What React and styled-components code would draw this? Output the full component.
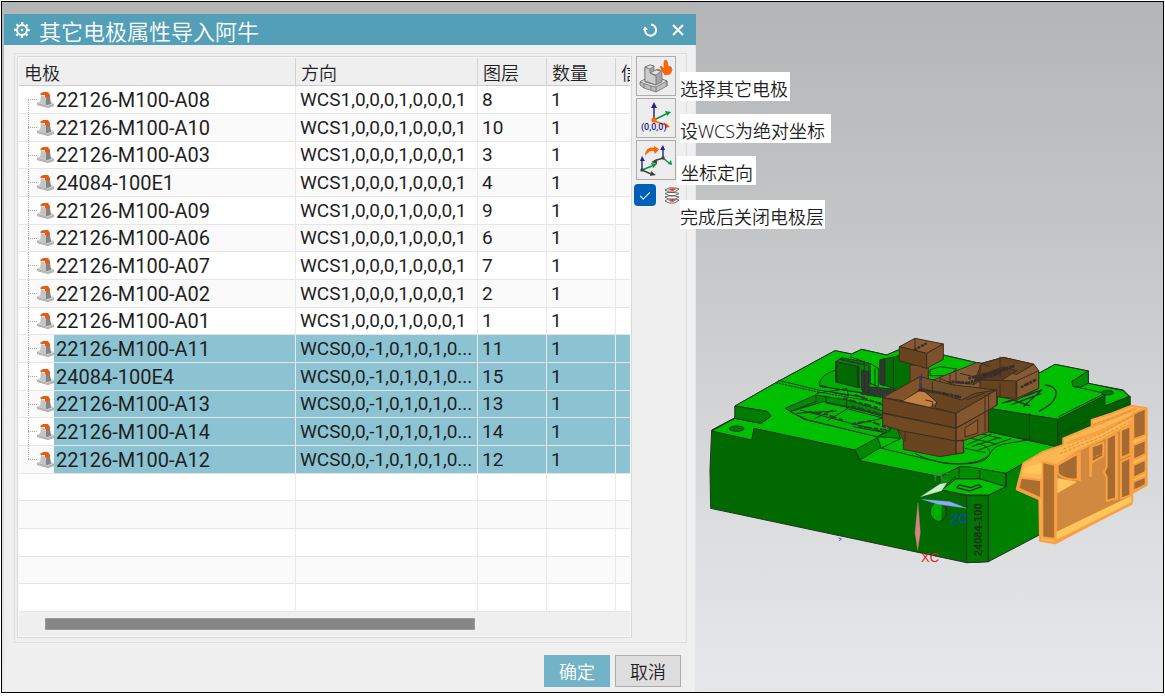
import React from "react";
import styled, { createGlobalStyle, css } from "styled-components";

const GlobalStyle = createGlobalStyle`
  *, *::before, *::after { box-sizing: border-box; }
  body {
    margin: 0;
    background: #fff;
    color: #1f1f1f;
    font-family: Roboto, "Noto Sans CJK SC", sans-serif;
  }
  button, input { font: inherit; margin: 0; padding: 0; }
`;

const CJK = `"Noto Sans CJK SC", sans-serif`;

const Workspace = styled.main`
  display: grid;
  grid-template-columns: minmax(0, 692fr) minmax(0, 467fr);
  margin: 1px 1px 0;
  padding-left: 2px;
  border: 1px solid #000;
  background: linear-gradient(#b4b5b7, #c5c6c8 35%, #d9dadc 70%, #e7e8eb);
`;

const Dialog = styled.section`
  position: relative;
  z-index: 1;
  margin-top: 12px;
  background: #efefef;
  border-right: 1px solid #e6e6e8;
`;

const TitleBar = styled.header`
  display: flex;
  align-items: center;
  height: 31px;
  margin-right: -1px;
  padding: 0 10px;
  background: #539fb8;
  color: #fff;
`;

const Title = styled.h1`
  flex: 1;
  margin: 0 0 0 9px;
  font: 350 22px/30px ${CJK};
`;

const TitleButton = styled.button`
  display: flex;
  align-items: center;
  justify-content: center;
  width: 16px;
  height: 20px;
  margin-left: 12px;
  border: 0;
  background: none;
  color: inherit;
`;

const Group = styled.div`
  display: flex;
  gap: 4px;
  margin: 8px 8px 0 10px;
  padding: 2px 0 4px 2px;
  border: 1px solid #dfdfdf;
`;

const ListBox = styled.div`
  flex: 1;
  min-width: 0;
  padding: 1px;
  border: 1px solid #dadada;
  background: #f8f8f8;
`;

const Table = styled.table`
  width: 100%;
  table-layout: fixed;
  border-collapse: separate;
  border-spacing: 0;
`;

const HeadCell = styled.th`
  height: 28px;
  padding: 0 0 0 5px;
  overflow: hidden;
  white-space: nowrap;
  text-align: left;
  background: #efefef;
  border-right: 1px solid #d4d4d4;
  border-bottom: 1px solid #cdcdcd;
  font: 350 18px/26px ${CJK};
  &:last-child { border-right: 0; }
`;

const Row = styled.tr`
  height: 28px;
  background: #fff;
  &:nth-child(3n) { height: 27px; }
  &:nth-child(even) { background: #fafafa; }
`;

const Cell = styled.td`
  padding: 0 0 0 4px;
  overflow: hidden;
  white-space: nowrap;
  font-size: 19px;
  line-height: 26px;
  border-right: 1px solid #e9e9e9;
  border-bottom: 1px solid #e6e6e6;
  &:last-child { border-right: 0; }
  ${(p) => p.$selected && css`background: #8cc3d2; background-clip: padding-box;`}
`;

const dots = (dir) => `repeating-linear-gradient(${dir}, #a3a3a3 0 1px, transparent 1px 2px)`;

const NameCell = styled(Cell)`
  padding-left: 18px;
  font-size: 20px;
  background-color: transparent;
  background-image:
    ${dots("to bottom")},
    ${dots("to right")}
    ${(p) => p.$selected && ", linear-gradient(to right, transparent 35px, #8cc3d2 35px)"};
  background-size: 1px ${(p) => (p.$end ? "50%" : "100%")}, 10px 1px, 100% 100%;
  background-position: 9px ${(p) => (p.$end === "first" ? "100%" : "0")}, 9px 50%, 0 0;
  background-repeat: no-repeat;
`;

const NameLine = styled.div`
  display: flex;
  align-items: center;
  gap: 1px;
`;

const ScrollTrack = styled.div`
  height: 24px;
  padding: 6px 0 0 26px;
  background: #efefef;
`;

const ScrollThumb = styled.div`
  width: 430px;
  max-width: 75%;
  height: 12px;
  background: #858585;
  border: 1px solid #9a9a9a;
`;

const Tools = styled.div`
  display: flex;
  flex-direction: column;
  gap: 2px;
  flex: 0 0 50px;
`;

const Tool = styled.div`
  position: relative;
  display: flex;
  align-items: center;
  height: 40px;
`;

const ToolButton = styled.button`
  display: flex;
  align-items: center;
  justify-content: center;
  width: 40px;
  height: 40px;
  border: 1px solid #adadad;
  background: #ededed;
`;

const CheckRow = styled(Tool)`
  gap: 8px;
  height: 22px;
  margin: 2px 0 0 -2px;
`;

const CheckBox = styled.input`
  appearance: none;
  display: grid;
  place-items: center;
  width: 22px;
  height: 22px;
  border-radius: 4px;
  background: #005fb8;
  &:checked::after {
    content: "";
    width: 10px;
    height: 5px;
    border: solid #fff;
    border-width: 0 0 1px 1px;
    transform: translateY(-1px) rotate(-45deg);
  }
`;

const Callout = styled.label`
  position: absolute;
  top: 16px;
  left: ${(p) => p.$left || 44}px;
  padding: 3px ${(p) => p.$trail || 1}px 0 ${(p) => p.$lead || 0}px;
  height: 29px;
  background: #fff;
  white-space: nowrap;
  font: 350 18px/28px "Noto Sans", ${CJK};
`;

const Footer = styled.footer`
  display: flex;
  justify-content: flex-end;
  gap: 5px;
  padding: 12px 14px 4px 0;
`;

const DialogButton = styled.button`
  width: 66px;
  height: 32px;
  border: 1px solid ${(p) => (p.$primary ? "#73b3c8" : "#adadad")};
  background: ${(p) => (p.$primary ? "#73b3c8" : "#dedede")};
  color: ${(p) => (p.$primary ? "#fff" : "#1f1f1f")};
  font: 350 18px/28px ${CJK};
`;

const Scene = styled.svg`
  display: block;
  width: 100%;
`;

const GearIcon = () => (
  <svg width="16" height="16" viewBox="0 0 16 16" fill="none" stroke="#fff">
    <circle cx="8" cy="8" r="5" strokeWidth="2" />
    <circle cx="8" cy="8" r="6.8" strokeWidth="2" strokeDasharray="2.3 3.04" strokeDashoffset="1.15" />
    <circle cx="8" cy="8" r="1.2" fill="#fff" stroke="none" />
  </svg>
);

const ResetIcon = () => (
  <svg width="16" height="16" viewBox="0 0 16 16" fill="none" stroke="#fff" strokeWidth="2">
    <path d="M9 2.5A5.6 5.6 0 1 1 3 7" />
    <path d="M.8 8.2 3 4.5l3 3.2Z" fill="#fff" stroke="none" />
  </svg>
);

const CloseIcon = () => (
  <svg width="14" height="14" viewBox="0 0 14 14" stroke="#fff" strokeWidth="2">
    <path d="m2 2 10 10M12 2 2 12" />
  </svg>
);

const ElectrodeIcon = () => (
  <svg width="18" height="18" viewBox="0 0 18 18" strokeLinejoin="round">
    <path d="m0 12 4-2h9l4 3v2l-6 2-11-3Z" fill="#9c9c9c" />
    <path d="m0 12 4-2h9l4 3-6 2Z" fill="#d6d6d6" />
    <path d="m0 13 11 3 6-2" fill="none" stroke="#c9c9c9" strokeWidth=".8" />
    <path d="m4 4 5 2v8l-6-2Z" fill="#c4c4c4" />
    <path d="m9 5 4 1 1 7-4 1H9Z" fill="#848484" />
    <path d="m3 3 3-2h5l2 3v2l-2 1-3-1V4H4Z" fill="#ea5b10" />
  </svg>
);

const PickIcon = () => (
  <svg width="36" height="36" viewBox="0 0 36 36" stroke="#666" strokeWidth=".7" strokeLinejoin="round">
    <path d="m2 24 7-4h12l8 3v5l-11 6-12-4-4-3Z" fill="#bdbdbd" />
    <path d="m2 24 7-4h12l8 3-11 6-5-1Z" fill="#e2e2e2" />
    <path d="M18 29v5m-12-8v4M13 28v4M29 23v5" fill="none" />
    <path d="m7 9 5-2 4 1v5l4-2 4 2v11l-6 3-11-3Z" fill="#a5a5a5" />
    <path d="m7 9 5 2v4l6 3v9L7 23Z" fill="#cdcdcd" />
    <path d="m7 9 5-2 4 1-4 3ZM12 15l6-3 5 1-5 4Z" fill="#e5e5e5" />
    <path d="m22 9 1-1 3 3V4l1-2 2 1 1 5 3 1 1 3-2 4-5 1Z" fill="#ff6500" stroke="#e35b08" />
  </svg>
);

const OriginIcon = () => (
  <svg width="36" height="36" viewBox="0 0 36 36" fill="none" strokeWidth="1.5">
    <path d="M16 20V6" stroke="#24248e" />
    <path d="m16 2-3 6h6Z" fill="#24248e" />
    <path d="m16 20 12-6" stroke="#00953c" />
    <path d="m33 12-6-1 2 5Z" fill="#00953c" />
    <path d="m16 21 12 4" stroke="#ff6500" />
    <path d="m32 27-4-4-1 5Z" fill="#ff6500" />
    <circle cx="16" cy="20" r="2.6" fill="#ff6500" />
    <text x="3" y="30" fill="#24248e" fontSize="9" fontWeight="500" fontFamily="Roboto, sans-serif">(0,0,0)</text>
  </svg>
);

const OrientIcon = () => (
  <svg width="36" height="36" viewBox="0 0 36 36" fill="none" strokeWidth="1.4">
    <path d="M4 28V17M25 16V6" stroke="#24248e" />
    <path d="m4 14-2 5h5ZM25 3l-3 5h5Z" fill="#24248e" />
    <path d="m4 28 10-4M25 16l6 5" stroke="#00953c" />
    <path d="m19 22-6-1 2 5ZM34 23l-1-5-3 4Z" fill="#00953c" />
    <path d="m4 28 9 4M25 16l-9 3" stroke="#444" />
    <path d="m18 33-5-4-1 5ZM13 20l6-3v5Z" fill="#444" />
    <circle cx="4" cy="28" r="1.7" fill="#444" />
    <circle cx="25" cy="16" r="1.7" fill="#444" />
    <path d="M7 14c0-6 4-10 9-8V4l5 3-4 5-1-3c-3-1-6 1-9 5Z" fill="#ff6500" />
  </svg>
);

const LayersIcon = () => (
  <svg width="16" height="17" viewBox="0 0 16 17" fill="#fff" stroke="#4a4a4a" strokeWidth=".8" strokeLinejoin="round">
    <path d="m1 14 3-2h7l4 1-4 3H5Z" />
    <path d="m4 14 4-2 4 1-3 2Z" fill="#ed3d36" stroke="none" />
    <path d="m1 10 3-1h7l4 1-4 2H5Z" />
    <path d="m1 6.500 3-1h7l4 1-4 2H5Z" />
    <path d="m1 3 4-2h7l3 1-4 3H5Z" fill="#e4f1e2" />
    <path d="m4 3 4-2 4 1-3 2Z" fill="#ed3d36" stroke="none" />
  </svg>
);

function Workpiece() {
  return (
    <g transform="translate(700 330) scale(.333333)" stroke="#26322a" strokeWidth="3" strokeLinejoin="round">
      <path fill="#006a00" d="M35 300 105 263V228L228 158 405 62l50 10 30-14 75 17 35-15 135 15 100 23 190 30 45-25 100 20v37l105 20 20 20v40l-270 145v190L865 695l-65 3L32 535 30 420Z" />
      <path fill="#00be00" d="M35 303 105 265 183 280 213 258 201 244 105 228 228 158 405 62 455 72 485 58 560 75 595 60 730 75 830 98 1020 128 1065 103 1165 123 1115 155 1125 170 1165 160 1270 182 1288 200 1215 228 1073 268 865 235 865 305 1070 350 1080 365 980 395 918 430 780 410 720 440 480 392 465 360 162 295 155 330Z" />
      <path fill="#007c00" d="m105 228 96 16 12 14-30 22-78-15Z" />
      <path fill="#006900" d="m865 235 208 33v82l-83-20-125-25Z" />
      <path fill="#006100" d="m1073 268 142-73v33l75-30v44l-217 110Z" />
      <path fill="#008d00" d="m1115 155 50-32v37l-25 12-20-2Z" />
      <path fill="none" d="M988 250v78M1073 315l217-99M228 158l126 28 215 37" strokeDasharray="7 2" />
      <path fill="none" d="m235 151 120 29 140 22M1076 260l139-70-90-20" />
      <ellipse cx="110" cy="296" rx="22" ry="8" fill="#007a00" />
      <ellipse cx="1222" cy="188" rx="18" ry="7" fill="#007a00" />

      <path fill="#008c00" d="m255 235 92-40 95 15 130 40 30 75-70-5-220-52Z" />
      <path fill="#00b900" d="m270 245 100-30 80 16 105 30 15 42-40 17-205-50Z" />
      <path fill="#008c00" d="M360 170c-10-25 30-45 55-50l75 10v60l-90-15Z" />
      <path fill="#00ad00" d="M358 165c0-26 30-40 65-50l70 10 5 65-105-16Z" />
      <path fill="#006b00" d="m407 95 70 15v63l-70-17Z" />
      <path fill="#008600" d="m407 95 18-12 82 16v62l-30 12v-63Z" />
      <path fill="#007000" d="m540 90 65-15 65 35v60l-65 15-65-25Z" />
      <path fill="#30392f" d="m485 120 20 5v65l-20-10ZM540 90l15-4v82l-15-5ZM498 170l90 8-45 24-60-10Z" />
      <path fill="#00c000" d="m510 100 25 15v55l-25-10ZM690 120l30-10 50 7-25 20h-55Z" />
      <path fill="none" d="M410 95v62M472 110v62M493 92v94M510 118v70M525 115v55M580 88v85M420 88l70 15M450 80l55 20M350 190l90-14 6 21-50-10M348 193v22l-78 30M378 197v22l170 35M440 202v34l110 28M290 250l120-7M345 265l55-25M380 273l60-35M455 285l110-24M300 240l260 68M535 318l70-40M460 290l90 17" />
      <path fill="none" stroke="#303e2e" strokeWidth="6" strokeDasharray="13 5 22 7" d="m325 245 55 8 52 20M455 282l55-9 55 22M430 205l110 30M465 195l100 36M455 228l90 26M425 90l75 15M475 290l85 10" />
      <path fill="#008800" d="m465 360 68-38 10 30-63 38Z" />
      <path fill="none" d="m543 355 60-30M541 354l179 43c40 10 120 5 145-20 15-15-9-35-35-35" />
      <path fill="none" d="M645 370c55 35 195 45 220 10 22-34 10-33 120-50M795 355l62 13M800 345l75-34M815 350l85-28M835 360l98-34M790 320l100 22M820 306l85 20" />
      <path fill="none" strokeWidth="4" d="M1035 165c50 5 45 48-18 79M905 220l120-40-55 50M920 217l82-28M932 225l90-34M940 210l50 18" />

      <g stroke="#3e2d20">
        <path fill="#845b34" d="m700 150 130-52 15 2 65-18 92 21 14 19v53l-66 35-58-10v25l-32 15-60 5Z" />
        <path fill="#694522" d="m845 100 65-18 92 21-52 30-50-10-80 40Z" />
        <path fill="#593a22" d="m860 130 50-20 40 12-60 38-55-8Z" />
        <path fill="#845a32" d="m950 153 66-31v53l-66 30Z" />
        <path fill="#674420" d="m840 150 110 3v52l-110-10Z" />
        <path fill="none" d="M700 150v35M720 140v40M750 128v35M768 122v38M840 105v45M900 80v60M948 155v45M900 160v38M735 168l150 30M740 155l85 8M780 130l80 20M845 100l25 10" />
        <path stroke="#352e29" strokeWidth="8" strokeDasharray="8 3 16 2" d="m755 155 50 4 120-45M805 145l100-25 40-13M870 140l30-13M963 172l45-23" fill="none" />

        <path fill="#764c26" d="M630 105h55v55h-55Z" />
        <path fill="#895a32" d="m598 50 47-25 85 17-50 28Z" />
        <path fill="#684320" d="m598 50 82 20v45l-82-23Z" />
        <path fill="#7c522d" d="m680 70 50-28v46l-50 27Z" />
        <path stroke="#352e29" strokeWidth="7" strokeDasharray="9 3" d="m642 60 38-20" />
        <path d="M645 25v38" />

        <path fill="#684420" d="m595 300 173 32h22l2 36-72 12-110-22v-28Z" />
        <path fill="#73502c" d="m548 203 112-63 100 25 130 15v45l-122 70Z" />
        <path fill="#805329" d="m548 203 112-63v40l-50 32Z" />
        <path fill="#c38040" stroke="none" d="m610 212 55-32 45 37-22 13Z" />
        <path fill="#694421" d="m665 175 120 35 40-20 65-10-122 70-63-16 5-18Z" />
        <path fill="#6a4320" d="m548 203 220 47v44l-220-46Z" />
        <path fill="#835630" d="m768 250 122-70v45l-25 16-97 53Z" />
        <path fill="#704821" d="m548 250 220 45v38l-165-31-55-17Z" />
        <path fill="#80532b" d="m768 295 97-54v65l-75 26h-22ZM768 333l22-3v38l-22 3Z" />
        <path fill="#89592f" d="m795 294 38-25v40l-38 12Z" />
        <path fill="none" d="m768 250v120M855 195v110M866 190v114M676 210l22 5v20M697 155v35M720 145l45 20M615 305v30M800 210l55-22" />
        <path stroke="#352e29" strokeWidth="8" strokeDasharray="22 2 10 2" d="m655 180 60 7 68 15" fill="none" />
        <path stroke="#2424b8" strokeDasharray="20 6" d="M664 132v50" />
      </g>

      <path fill="#008000" d="m865 495 53-25v-40l62-35-30 80 68 30v110l-153 80Z" />
      <path fill="#008d00" d="m720 440 60-30h25l113 20v40l-78-23h-72l-43 33-5-10Z" />
      <path fill="#00c000" d="m725 480 43-33h72l78 23-53 25h-65Z" />
      <path fill="#007600" d="M800 497h65v198l-65 3Z" />
      <path fill="none" d="m725 474 43-35M777 410v33M839 420v27M918 430v40M800 497l-75-17M865 495v200" />
      <path fill="none" strokeWidth="4" d="m770 473 40 10 35-13-8-6-25 9-34-8Z" />
      <ellipse cx="716" cy="545" rx="25" ry="29" fill="#00ae00" />
      <path d="M725 520c20 14 14 40-1 51" fill="#007800" />
      <path fill="#d78285" stroke="#c77c7e" strokeWidth="1" d="m654 518 7 90-8 52-8-52Z" />
      <path fill="#c9edce" stroke="#a5c8a9" strokeWidth="1" d="m662 500 58-38 20-3-15 23Z" />
      <path fill="#8faafa" stroke="#7792e8" strokeWidth="1" d="m665 508 85 7 50 20-85-12Z" />
      <path stroke="#4e5fff" d="m415 624 10 3-8 5" fill="none" />

      <g stroke="#f8a044" strokeWidth="6">
        <path fill="#fcb753" d="m970 400 60-35 60-20v-20l85-35v-20l60-20 60-23 45 8v230l-45 25v30l-230 120-45-8-2-124-68-30Z" />
        <path fill="#d0893e" d="m1067 408 65-45 75-35 88-48v235l-230 113Z" />
        <path fill="#ac6d2e" d="m1027 395 40 10v222l-40-5ZM963 443l60 8v54l-68-30Z" />
        <path fill="#a46a31" d="m1073 405 60-34v76c-20 5-48-3-60-18ZM1175 350l35-12v40l-35 20ZM1220 325l28-15v195l-28 8v-72l-8-15 8-15ZM1300 250l37-15v80l-37 13ZM1300 345l37-15v42l-37 18ZM1300 405l37-16v37l-37 18ZM1300 455l37-15v25l-37 18ZM1263 300l28-12v84l-28 12ZM1263 395l28-12v113l-28 10Z" />
        <path fill="none" strokeWidth="9" d="M1067 405v227l228-112M1295 275v240M1138 365v88M1172 350v90M1250 310v200M1100 340l100-35 100-48M1175 290l135-55" />
        <path fill="#ffc65b" stroke="none" d="m1070 605 224-108v20l-224 112ZM975 413l50-15v35l-60-5ZM1072 445l60 10-60 35Z" />
        <path stroke="#dc8e38" strokeWidth="3" strokeDasharray="9 5" fill="none" d="m1090 357 120-50 110-63M1080 371l125-51 90-48M1180 284l120-45M1175 384l30-12M1180 410l35 8" />
      </g>
    </g>
  );
}

const rows = [
  ["22126-M100-A08", "8"],
  ["22126-M100-A10", "10"],
  ["22126-M100-A03", "3"],
  ["24084-100E1", "4"],
  ["22126-M100-A09", "9"],
  ["22126-M100-A06", "6"],
  ["22126-M100-A07", "7"],
  ["22126-M100-A02", "2"],
  ["22126-M100-A01", "1"],
  ["22126-M100-A11", "11", true],
  ["24084-100E4", "15", true],
  ["22126-M100-A13", "13", true],
  ["22126-M100-A14", "14", true],
  ["22126-M100-A12", "12", true],
];

export default function App() {
  return (
    <>
      <GlobalStyle />
      <Workspace>
        <Dialog>
          <TitleBar>
            <GearIcon />
            <Title>其它电极属性导入阿牛</Title>
            <TitleButton aria-label="重置"><ResetIcon /></TitleButton>
            <TitleButton aria-label="关闭"><CloseIcon /></TitleButton>
          </TitleBar>
          <Group>
            <ListBox>
              <Table>
                <colgroup>
                  <col style={{ width: 277 }} />
                  <col style={{ width: 182 }} />
                  <col style={{ width: 69 }} />
                  <col style={{ width: 69 }} />
                  <col />
                </colgroup>
                <thead>
                  <tr>
                    {["电极", "方向", "图层", "数量", "信"].map((h) => <HeadCell key={h}>{h}</HeadCell>)}
                  </tr>
                </thead>
                <tbody>
                  {rows.map(([name, layer, selected], i) => (
                    <Row key={name}>
                      <NameCell $selected={selected} $end={i === 0 ? "first" : i === rows.length - 1 ? "last" : undefined}>
                        <NameLine><ElectrodeIcon />{name}</NameLine>
                      </NameCell>
                      <Cell $selected={selected}>{selected ? "WCS0,0,-1,0,1,0,1,0..." : "WCS1,0,0,0,1,0,0,0,1"}</Cell>
                      <Cell $selected={selected}>{layer}</Cell>
                      <Cell $selected={selected}>1</Cell>
                      <Cell $selected={selected} />
                    </Row>
                  ))}
                  {[1, 2, 3, 4, 5].map((n) => (
                    <Row key={n}><Cell /><Cell /><Cell /><Cell /><Cell /></Row>
                  ))}
                </tbody>
              </Table>
              <ScrollTrack><ScrollThumb /></ScrollTrack>
            </ListBox>
            <Tools>
              <Tool>
                <ToolButton id="pick"><PickIcon /></ToolButton>
                <Callout htmlFor="pick" $trail={2}>选择其它电极</Callout>
              </Tool>
              <Tool>
                <ToolButton id="origin"><OriginIcon /></ToolButton>
                <Callout htmlFor="origin" $trail={6}>设WCS为绝对坐标</Callout>
              </Tool>
              <Tool>
                <ToolButton id="orient"><OrientIcon /></ToolButton>
                <Callout htmlFor="orient" $left={41} $lead={4} $trail={3}>坐标定向</Callout>
              </Tool>
              <CheckRow>
                <CheckBox type="checkbox" id="close-layer" defaultChecked />
                <LayersIcon />
                <Callout htmlFor="close-layer" $left={46}>完成后关闭电极层</Callout>
              </CheckRow>
            </Tools>
          </Group>
          <Footer>
            <DialogButton $primary>确定</DialogButton>
            <DialogButton>取消</DialogButton>
          </Footer>
        </Dialog>
        <Scene viewBox="696 2 467 690" role="img" aria-label="24084-100">
          <Workpiece />
          <g fontFamily="Liberation Sans, sans-serif" fontSize="13">
            <text x="921" y="562" fill="#d32828">XC</text>
            <text x="951" y="523" fill="#0b3fe0">ZC</text>
            <text x="931" y="481" fill="#3f8040">YC</text>
            <text transform="translate(982 556) rotate(-90)" fill="#1d2f1d" fontSize="11" fontWeight="700">24084-100</text>
          </g>
        </Scene>
      </Workspace>
    </>
  );
}
